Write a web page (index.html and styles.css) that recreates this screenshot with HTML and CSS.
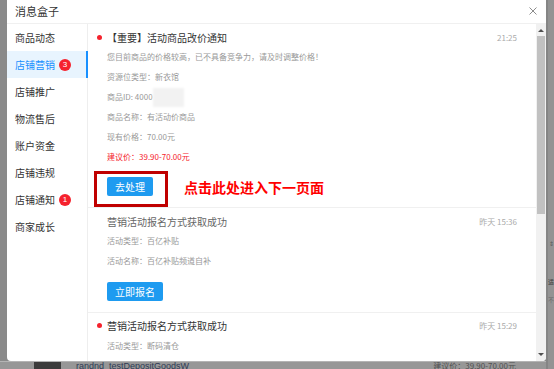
FILE: index.html
```html
<!DOCTYPE html>
<html lang="zh-CN">
<head>
    <meta charset="UTF-8">
    <meta name="viewport" content="width=device-width, initial-scale=1.0">
    <title>消息盒子</title>
    <link rel="stylesheet" href="styles.css">
</head>
<body>

<!-- 背后的页面（被遮罩） -->
<div class="page">
    <div class="page-main">
        <div class="goods-row">
            <span class="thumb"></span>
            <span class="goods-name">randnd_testDepositGoodsW</span>
            <span class="goods-price">建议价：39.90-70.00元</span>
        </div>
    </div>
    <div class="page-side">
        <span class="sort">⇕</span>
        <span class="side-text">适</span>
        <span class="side-text">不</span>
    </div>
</div>

<!-- 消息盒子弹窗 -->
<div class="dialog">
    <div class="dialog-header">
        <span class="dialog-title">消息盒子</span>
        <svg class="close" width="8" height="8" viewBox="0 0 8 8">
            <path d="M0.5 0.5 L7.5 7.5 M7.5 0.5 L0.5 7.5" stroke="#8c8c8c" stroke-width="1" fill="none"/>
        </svg>
    </div>

    <div class="dialog-body">
        <ul class="menu">
            <li>商品动态</li>
            <li class="active">店铺营销<span class="badge">3</span></li>
            <li>店铺推广</li>
            <li>物流售后</li>
            <li>账户资金</li>
            <li>店铺违规</li>
            <li>店铺通知<span class="badge">1</span></li>
            <li>商家成长</li>
        </ul>

        <div class="messages">
            <div class="msg">
                <div class="msg-head">
                    <span class="dot"></span>
                    <span class="msg-title">【重要】活动商品改价通知</span>
                    <span class="msg-time">21:25</span>
                </div>
                <div class="msg-lines">
                    <div>您目前商品的价格较高，已不具备竞争力，请及时调整价格！</div>
                    <div>资源位类型：新衣馆</div>
                    <div>商品ID: 4000<span class="masked"></span></div>
                    <div>商品名称：有活动价商品</div>
                    <div>现有价格：70.00元</div>
                    <div class="price-tip">建议价：39.90-70.00元</div>
                </div>
                <div class="msg-actions">
                    <span class="mark"><button class="btn">去处理</button></span>
                    <span class="annotate">点击此处进入下一页面</span>
                </div>
            </div>

            <div class="msg read">
                <div class="msg-head">
                    <span class="msg-title">营销活动报名方式获取成功</span>
                    <span class="msg-time">昨天 15:36</span>
                </div>
                <div class="msg-lines">
                    <div>活动类型：百亿补贴</div>
                    <div>活动名称：百亿补贴频道自补</div>
                </div>
                <div class="msg-actions">
                    <button class="btn">立即报名</button>
                </div>
            </div>

            <div class="msg">
                <div class="msg-head">
                    <span class="dot"></span>
                    <span class="msg-title">营销活动报名方式获取成功</span>
                    <span class="msg-time">昨天 15:29</span>
                </div>
                <div class="msg-lines">
                    <div>活动类型：断码清仓</div>
                </div>
            </div>
        </div>

        <!-- 滚动条 -->
        <div class="scrollbar">
            <span class="sb-arrow"><span class="tri-up"></span></span>
            <span class="sb-thumb"></span>
            <span class="sb-space"></span>
            <span class="sb-arrow bottom"><span class="tri-down"></span></span>
        </div>
    </div>
</div>

</body>
</html>
```

FILE: styles.css
```css
* {
    box-sizing: border-box;
}
body {
    margin: 0;
    width: 554px;
    height: 369px;
    overflow: hidden;
    background-color: #8a8a8a;
    font-family: "Noto Sans CJK SC", "Microsoft YaHei", sans-serif;
    color: #333;
}

/* 背后的页面 */
.page {
    display: flex;
    height: 369px;
}
.page-main {
    width: 546px;
    padding-top: 361px;
}
.goods-row {
    display: flex;
    align-items: center;
    height: 8px;
    background-color: #979797;
    border-top: 1px solid #b4b4b4;
    overflow: hidden;
}
.thumb {
    width: 27px;
    height: 8px;
    margin-left: 34px;
    background-color: #3c3c3c;
}
.goods-name {
    margin-left: 15px;
    font-size: 9px;
    line-height: 8px;
    color: #2e3a55;
    font-family: "Liberation Sans", Arial, sans-serif;
}
.goods-price {
    margin-left: auto;
    margin-right: 30px;
    font-size: 8px;
    line-height: 8px;
    color: #505050;
}
.page-side {
    width: 8px;
    display: flex;
    flex-direction: column;
    align-items: center;
    padding-top: 240px;
    overflow: hidden;
    background-color: #939393;
    border-left: 2px solid #858585;
}
.sort {
    font-size: 6px;
    line-height: 8px;
    color: #555;
}
.side-text {
    margin-top: 30px;
    font-size: 6px;
    line-height: 8px;
    color: #3a3a3a;
}
.side-text + .side-text {
    margin-top: 10px;
    color: #6a6a6a;
}

/* 弹窗 */
.dialog {
    position: absolute;
    left: 7px;
    top: 0;
    width: 539px;
    height: 361px;
    background-color: #fff;
    border-radius: 0 0 4px 4px;
    display: flex;
    flex-direction: column;
    overflow: hidden;
}
.dialog-header {
    height: 24px;
    flex: none;
    display: flex;
    align-items: center;
    justify-content: space-between;
    padding: 0 9px 2px 8px;
    border-bottom: 1px solid #f0f0f0;
}
.dialog-title {
    font-size: 11px;
    line-height: 14px;
    color: #333;
}
.close {
    display: block;
}
.dialog-body {
    flex: 1;
    display: flex;
    min-height: 0;
}

/* 左侧菜单 */
.menu {
    list-style: none;
    margin: 0;
    padding: 0;
    width: 81px;
    flex: none;
    border-right: 1px solid #eee;
}
.menu li {
    display: flex;
    align-items: center;
    height: 27px;
    padding-left: 8px;
    font-size: 10px;
    color: #333;
}
.menu li.active {
    background-color: #e8f4fe;
    color: #1890ff;
    box-shadow: inset -2px 0 0 #1890ff;
    margin-right: -1px;
}
.badge {
    display: inline-flex;
    align-items: center;
    justify-content: center;
    width: 12px;
    height: 12px;
    margin-left: 4px;
    border-radius: 50%;
    background-color: #f5222d;
    color: #fff;
    font-size: 8px;
    font-family: "Liberation Sans", Arial, sans-serif;
}

/* 消息列表 */
.messages {
    flex: 1;
    overflow: hidden;
}
.msg {
    padding: 4px 19px 11px 19px;
    border-bottom: 1px solid #f0f0f0;
}
.msg-head {
    display: flex;
    align-items: center;
    height: 18px;
}
.dot {
    width: 5px;
    height: 5px;
    margin-left: -10px;
    margin-right: 5px;
    border-radius: 50%;
    background-color: #f5222d;
}
.msg-title {
    flex: 1;
    font-size: 10px;
    color: #333;
}
.read .msg-title {
    color: #666;
}
.msg-time {
    font-size: 8px;
    color: #aaa;
}
.msg-lines {
    margin-top: 1px;
    font-size: 8px;
    line-height: 19.8px;
    color: #999;
}
.price-tip {
    color: #f5222d;
}
.masked {
    display: inline-block;
    width: 31px;
    height: 19px;
    vertical-align: middle;
    background-color: #f2f2f2;
    filter: blur(1px);
}
.msg-actions {
    display: flex;
    align-items: center;
    margin-top: 11px;
    height: 19px;
}
.btn {
    height: 19px;
    padding: 0 8px;
    border: none;
    border-radius: 2px;
    background-color: #1e9bf0;
    color: #fff;
    font-family: inherit;
    font-size: 10px;
    line-height: 19px;
}
.mark {
    position: relative;
    display: flex;
}
.mark::after {
    content: "";
    position: absolute;
    left: -13px;
    top: -6px;
    right: -15px;
    bottom: -11px;
    border: 3px solid #c00000;
}
.annotate {
    margin-left: 31px;
    font-size: 14px;
    font-weight: bold;
    color: #ff0000;
}

/* 滚动条 */
.scrollbar {
    width: 10px;
    flex: none;
    display: flex;
    flex-direction: column;
    align-items: center;
    background-color: #f1f1f1;
}
.sb-arrow {
    height: 12px;
    display: flex;
    align-items: center;
    justify-content: center;
}
.sb-arrow.bottom {
    height: 14px;
}
.tri-up {
    border-left: 3px solid transparent;
    border-right: 3px solid transparent;
    border-bottom: 3px solid #505050;
}
.tri-down {
    border-left: 3px solid transparent;
    border-right: 3px solid transparent;
    border-top: 3px solid #505050;
}
.sb-thumb {
    width: 8px;
    height: 178px;
    background-color: #c1c1c1;
}
.sb-space {
    flex: 1;
}
```
